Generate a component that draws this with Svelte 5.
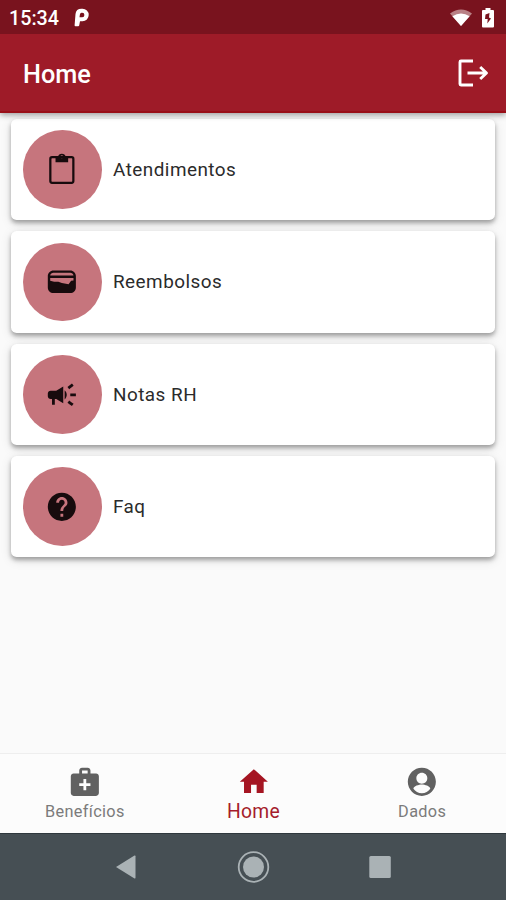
<script>
  const cards = [
    { icon: 'clipboard', label: 'Atendimentos' },
    { icon: 'wallet', label: 'Reembolsos' },
    { icon: 'megaphone', label: 'Notas RH' },
    { icon: 'help', label: 'Faq' }
  ];
</script>

<div class="screen">
  <header>
    <div class="status">
      <span class="time">15:34</span>
      <svg class="pmark" width="16" height="20" viewBox="0 0 16 20">
        <path fill="#fff" fill-rule="evenodd" d="M1.500 6Q2 .8 7.500 .8H8.500a6 6 0 0 1 0 12.400H6l-.8 4.300Q5 18.300 4.200 18.300H1.500Q.5 18.300 .6 17.300zM5.900 6.500L5.500 9.200H8.200a2.200 2.200 0 0 0 0-4.400H7.500Q6.200 4.800 5.900 6.500z" />
      </svg>
      <svg class="wifi" width="22" height="18" viewBox="0 0 22 18">
        <path fill="#b98085" d="M0 4.500Q11-3.500 22 4.500L11 17z" />
        <path fill="#fff" d="M2.400 7.200Q11 1.700 19.600 7.200L11 17z" />
      </svg>
      <svg class="battery" width="12" height="20" viewBox="0 0 12 20">
        <path fill="#fff" d="M3.500 0h5v2H11q1 0 1 1v15.500q0 1-1 1H1q-1 0-1-1V3q0-1 1-1h2.500z" />
        <path fill="#79131e" d="M7.500 5L3.500 6.500 3 11h2.700L5.300 15.500 9 10.500 7 9.500z" />
      </svg>
    </div>
    <div class="appbar">
      <h1>Home</h1>
      <svg width="32" height="30" viewBox="0 0 32 30" fill="none" stroke="#fff" stroke-width="2.900" stroke-linejoin="round">
        <path d="M16 3H4Q3 3 3 4v22Q3 27 4 27h12" />
        <path d="M10.500 15h19M23.200 9l6.300 6-6.300 6" />
      </svg>
    </div>
  </header>

  <main>
    {#each cards as card}
      <div class="card">
        <div class="circle">
          <svg width="33.700" height="33.700" viewBox="0 0 24 24" fill="#170b0d">
            {#if card.icon === 'clipboard'}
              <path fill="none" stroke="#170b0d" stroke-width="1.600" d="M5 3h14q1.200 0 1.200 1.200V20q0 1.200-1.200 1.200H5q-1.200 0-1.200-1.200V4.200Q3.800 3 5 3z" />
              <path fill-rule="evenodd" d="M7.500 2.700h1.700a2.900 2.900 0 0 1 5.600 0h1.700V6.600h-9zM12 1.600a1.100 1.100 0 1 0 0 2.200 1.100 1.100 0 0 0 0-2.200z" />
            {:else if card.icon === 'wallet'}
              <path fill-rule="evenodd" d="M18 4H6C3.800 4 2 5.800 2 8v8c0 2.200 1.800 4 4 4h12c2.200 0 4-1.800 4-4V8c0-2.200-1.800-4-4-4zM3.700 7.500C3.900 6.200 4.900 5.600 6 5.600h12c1.100 0 2.100.6 2.300 1.900zM3.700 9.300H20.300V11L18.600 11.300 16.800 13.700 12 12.800 9.500 11.900 6.500 12 3.700 11.300z" />
            {:else if card.icon === 'megaphone'}
              <path d="M18 11v2h4v-2zM16 17.610c.96.710 2.210 1.650 3.200 2.390.4-.53.800-1.070 1.200-1.600-.99-.74-2.240-1.680-3.200-2.400-.4.540-.8 1.080-1.200 1.610zM20.400 5.600c-.4-.53-.8-1.070-1.200-1.600-.99.740-2.240 1.680-3.200 2.400.4.530.8 1.070 1.200 1.600.96-.72 2.210-1.650 3.200-2.400zM4 9c-1.100 0-2 .9-2 2v2c0 1.100.9 2 2 2h1v4h2v-4h1l5 3V6L8 9zM15.500 12c0-1.330-.58-2.530-1.500-3.350v6.690c.92-.81 1.500-2.010 1.500-3.340z" />
            {:else}
              <path d="M12 2C6.480 2 2 6.480 2 12s4.480 10 10 10 10-4.480 10-10S17.520 2 12 2zm1 17h-2v-2h2v2zm2.070-7.750l-.9.920C13.450 12.900 13 13.500 13 15h-2v-.5c0-1.100.450-2.100 1.170-2.830l1.240-1.260c.370-.36.590-.86.590-1.410 0-1.100-.9-2-2-2s-2 .9-2 2H8c0-2.210 1.790-4 4-4s4 1.790 4 4c0 .88-.36 1.680-.93 2.250z" />
            {/if}
          </svg>
        </div>
        <span>{card.label}</span>
      </div>
    {/each}
  </main>

  <nav>
    <div class="tab">
      <svg width="33.700" height="33.700" viewBox="0 0 24 24">
        <path fill="#616161" fill-rule="evenodd" d="M20 6h-4V4c0-1.100-.9-2-2-2h-4c-1.100 0-2 .9-2 2v2H4c-1.100 0-2 .9-2 2v12c0 1.100.9 2 2 2h16c1.100 0 2-.9 2-2V8c0-1.100-.9-2-2-2zM10 4h4v2h-4zm6 11h-3v3h-2v-3H8v-2h3v-3h2v3h3z" />
      </svg>
      <span>Benefícios</span>
    </div>
    <div class="tab active">
      <svg width="33.700" height="33.700" viewBox="0 0 24 24">
        <path fill="#a51522" d="M10 20v-6h4v6h5v-8h3L12 3 2 12h3v8z" />
      </svg>
      <span>Home</span>
    </div>
    <div class="tab">
      <svg width="33.700" height="33.700" viewBox="0 0 24 24">
        <path fill="#616161" d="M12 2C6.480 2 2 6.480 2 12s4.480 10 10 10 10-4.480 10-10S17.520 2 12 2zm0 3.500c2.200 0 3.900 1.700 3.900 3.900s-1.700 3.900-3.900 3.900-3.900-1.700-3.900-3.900S9.800 5.500 12 5.500zm0 14.700c-2.500 0-4.710-1.280-6-3.220.03-1.990 4-3.080 6-3.080s5.970 1.090 6 3.080c-1.290 1.940-3.500 3.220-6 3.220z" />
      </svg>
      <span>Dados</span>
    </div>
  </nav>

  <footer>
    <svg width="34" height="34" viewBox="0 0 34 34"><path fill="#aab2b5" d="M6 17L24.500 5.600q1-.4 1 .7v21.400q0 1.100-1 .7z" /></svg>
    <svg width="34" height="34" viewBox="0 0 34 34">
      <circle cx="17.500" cy="17" r="14.800" fill="none" stroke="#aab2b5" stroke-width="1.800" />
      <circle cx="17.500" cy="17" r="10.500" fill="#aab2b5" />
    </svg>
    <svg width="34" height="34" viewBox="0 0 34 34"><rect x="6.300" y="6" width="21.500" height="22" rx="1.500" fill="#aab2b5" /></svg>
  </footer>
</div>

<style>
  :global(body) { margin: 0; }
  .screen {
    width: 506px;
    height: 900px;
    display: flex;
    flex-direction: column;
    background: #fafafa;
    font-family: Roboto, "Liberation Sans", sans-serif;
    overflow: hidden;
  }
  svg { display: block; flex: none; }
  header { box-shadow: 0 2px 6px rgba(0, 0, 0, .38); z-index: 1; }
  .status {
    height: 34px;
    box-sizing: border-box;
    padding: 2px 12px 0 9px;
    display: flex;
    align-items: center;
    background: #79131e;
    color: #fff;
  }
  .time { font-size: 19.700px; font-weight: 500; }
  .pmark { margin-left: 15px; }
  .wifi { margin-left: auto; }
  .battery { margin-left: 10px; }
  .appbar {
    height: 79px;
    box-sizing: border-box;
    padding: 0 17.500px 0 23px;
    display: flex;
    align-items: center;
    justify-content: space-between;
    background: #9e1b28;
    border-bottom: 2px solid #990f18;
    color: #fff;
  }
  h1 { margin: 4px 0 0; font-size: 25.300px; line-height: 30px; font-weight: 500; }
  .appbar svg { margin-top: 1px; }
  main {
    flex: 1;
    padding: 6px 11px 0;
    display: flex;
    flex-direction: column;
    gap: 11.200px;
  }
  .card {
    height: 101.200px;
    box-sizing: border-box;
    padding-left: 12px;
    display: flex;
    align-items: center;
    gap: 11.300px;
    background: #fff;
    border-radius: 5.600px;
    box-shadow: 0 3px 4px rgba(0, 0, 0, .3), 0 3px 11px rgba(0, 0, 0, .13);
    color: #2b2b2b;
    font-size: 18.900px;
    letter-spacing: .48px;
  }
  .card span { line-height: 22px; padding-top: 1px; }
  .circle {
    width: 78.700px;
    height: 78.700px;
    border-radius: 50%;
    background: #c6757d;
    display: flex;
    align-items: center;
    justify-content: center;
  }
  .circle svg { margin-right: .6px; }
  nav {
    height: 80px;
    box-sizing: border-box;
    border-top: 1px solid #eeeeee;
    display: flex;
    background: #fcfcfc;
  }
  .tab {
    flex: 1;
    padding: 11px 0 0 1px;
    display: flex;
    flex-direction: column;
    align-items: center;
    color: #7b7b7b;
    font-size: 16.300px;
    line-height: 20px;
    letter-spacing: .35px;
  }
  .tab span { margin-top: 3px; }
  .active { color: #a51c2c; font-size: 19.300px; letter-spacing: .3px; }
  footer {
    height: 67px;
    box-sizing: border-box;
    border-top: 1px solid #2f383d;
    display: flex;
    justify-content: center;
    align-items: center;
    gap: 92.500px;
    background: #464f54;
  }
</style>
